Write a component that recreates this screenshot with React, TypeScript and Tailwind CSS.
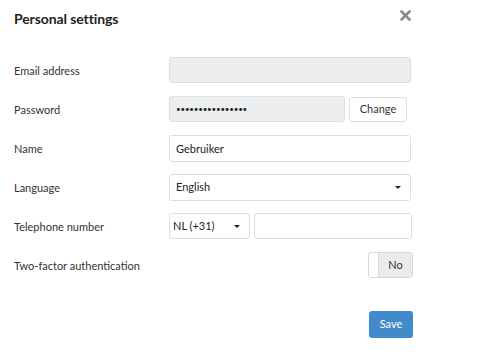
import { useState } from 'react'

function Caret() {
  return (
    <svg width="6" height="3" viewBox="0 0 6 3" className="shrink-0">
      <path d="M0 0 L6 0 L3 3 Z" fill="#222" />
    </svg>
  )
}

function Row({ label, children }: { label: string; children: React.ReactNode }) {
  return (
    <div className="flex items-center h-[26px]">
      <div className="w-[155px] shrink-0 pt-[2px] text-[11px] text-[#333]">{label}</div>
      {children}
    </div>
  )
}

export default function App() {
  const [name, setName] = useState('Gebruiker')

  return (
    <div
      className="w-[480px] h-[354px] bg-white relative"
      style={{ fontFamily: 'Lato, "Noto Sans", sans-serif' }}
    >
      {/* Header */}
      <div className="flex items-center justify-between pl-[14px] pr-[69px] pt-[3px] h-[33px]">
        <h1 className="text-[14px] font-bold text-[#222] tracking-[-0.1px]">Personal settings</h1>
        <button aria-label="Close" className="p-0 mb-[6px]">
          <svg width="11" height="11" viewBox="0 0 11 11">
            <path d="M1.5 1.5 L9.5 9.5 M9.5 1.5 L1.5 9.5" stroke="#8a8a8a" strokeWidth="2.6" strokeLinecap="round" />
          </svg>
        </button>
      </div>

      {/* Form */}
      <div className="flex flex-col gap-[13px] pl-[14px] pt-[24px]">
        <Row label="Email address">
          <div className="w-[242px] h-[26px] rounded-[3px] border border-[#dcdfe2] bg-[#eceef0]" />
        </Row>

        <Row label="Password">
          <div className="flex items-center gap-[4px]">
            <div className="w-[176px] h-[26px] rounded-[3px] border border-[#dcdfe2] bg-[#eceef0] flex items-center px-[6px] text-[8px] leading-none tracking-[-0.2px] text-[#222]">
              ••••••••••••••••
            </div>
            <button className="w-[58px] h-[25px] rounded-[3px] border border-[#dcdfe2] bg-white text-[11px] text-[#333]">
              Change
            </button>
          </div>
        </Row>

        <Row label="Name">
          <input
            value={name}
            onChange={(e) => setName(e.target.value)}
            className="w-[242px] h-[27px] rounded-[3px] border border-[#dcdfe2] bg-white px-[6px] text-[11px] text-[#222] outline-none"
          />
        </Row>

        <Row label="Language">
          <div className="w-[242px] h-[27px] rounded-[3px] border border-[#dcdfe2] bg-white flex items-center justify-between pl-[6px] pr-[9px] text-[11px] text-[#222]">
            <span>English</span>
            <Caret />
          </div>
        </Row>

        <Row label="Telephone number">
          <div className="flex items-center gap-[4px]">
            <div className="w-[81px] h-[26px] rounded-[3px] border border-[#dcdfe2] bg-white flex items-center justify-between pl-[3px] pr-[9px] text-[11px] text-[#222]">
              <span>NL (+31)</span>
              <Caret />
            </div>
            <div className="w-[158px] h-[26px] rounded-[3px] border border-[#dcdfe2] bg-white" />
          </div>
        </Row>

        <Row label="Two-factor authentication">
          <div className="w-[244px] flex justify-end">
            <div className="w-[45px] h-[26px] rounded-[3px] border border-[#d6d6d6] flex overflow-hidden">
              <div className="w-[10px] bg-white border-r border-[#d6d6d6]" />
              <div className="flex-1 bg-[#ebebeb] flex items-center justify-center text-[11px] text-[#333]">No</div>
            </div>
          </div>
        </Row>
      </div>

      {/* Footer */}
      <div className="flex justify-end pr-[67px] pt-[33px]">
        <button className="w-[44px] h-[27px] rounded-[3px] bg-[#428bca] text-white text-[11px]">Save</button>
      </div>
    </div>
  )
}
